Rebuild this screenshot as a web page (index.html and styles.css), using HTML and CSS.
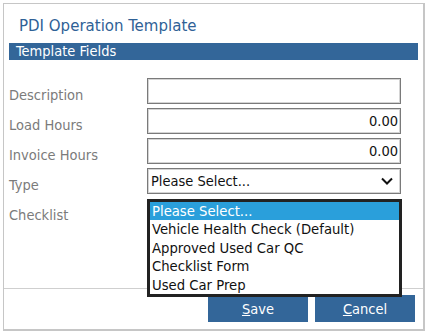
FILE: index.html
```html
<!DOCTYPE html>
<html lang="en">

<head>
    <meta charset="UTF-8">
    <title>PDI Operation Template</title>
    <link rel="stylesheet" href="styles.css">
</head>

<body>
    <div class="dialog">
        <h1 class="dialog-title">PDI Operation Template</h1>
        <div class="section-bar">Template Fields</div>

        <div class="form-grid">
            <label>Description</label>
            <div class="field"><input type="text" value=""></div>

            <label>Load Hours</label>
            <div class="field"><input type="text" class="num" value="0.00"></div>

            <label>Invoice Hours</label>
            <div class="field"><input type="text" class="num" value="0.00"></div>

            <label>Type</label>
            <div class="field">
                <div class="select-box">
                    <span>Please Select...</span>
                    <svg class="chevron" width="14" height="10" viewBox="0 0 14 10">
                        <path d="M2 2.5 L7 7.5 L12 2.5" fill="none" stroke="#111" stroke-width="2"/>
                    </svg>
                </div>
            </div>

            <label>Checklist</label>
            <div class="field dropdown-holder">
                <ul class="dropdown-list">
                    <li class="selected">Please Select...</li>
                    <li>Vehicle Health Check (Default)</li>
                    <li>Approved Used Car QC</li>
                    <li>Checklist Form</li>
                    <li>Used Car Prep</li>
                </ul>
            </div>
        </div>

        <div class="dialog-footer">
            <button class="btn"><u>S</u>ave</button>
            <button class="btn"><u>C</u>ancel</button>
        </div>
    </div>
</body>

</html>
```

FILE: styles.css
```css
* {
    margin: 0;
    padding: 0;
    box-sizing: border-box;
    font-family: 'DejaVu Sans Condensed', 'DejaVu Sans', sans-serif;
    font-stretch: condensed;
}

body {
    background: #fff;
    padding: 3px 0 0 3px;
}

.dialog {
    width: 422px;
    height: 328px;
    border: 1px solid #c6c6c6;
    border-right: 2px solid #c6c6c6;
    border-bottom: 2px solid #c6c6c6;
    display: flex;
    flex-direction: column;
}

.dialog-title {
    font-size: 16.7px;
    font-weight: normal;
    color: #2f6196;
    padding: 11px 0 0 15px;
    height: 39px;
}

.section-bar {
    margin: 0 5px;
    height: 17px;
    background: #336699;
    color: #fff;
    font-size: 14.5px;
    line-height: 17px;
    padding-left: 7px;
}

.form-grid {
    display: grid;
    grid-template-columns: 138px 254px;
    grid-auto-rows: 26px;
    row-gap: 4px;
    margin-top: 18px;
    padding-left: 5px;
}

.form-grid label {
    font-size: 14.5px;
    color: #7b7b7b;
    line-height: 30px;
    padding-top: 2px;
}

.field {
    position: relative;
}

.field input,
.select-box {
    width: 100%;
    height: 26px;
    border: 1px solid #7a7a7a;
    box-shadow: inset 0 0 0 1px #d4d4d4;
    font-size: 14.5px;
    color: #111;
    padding: 0 4px;
    background: #fff;
}

.field input.num {
    text-align: right;
    padding-right: 2px;
}

.select-box {
    display: flex;
    align-items: center;
    justify-content: space-between;
    padding: 0 6px 0 3px;
}

.dropdown-list {
    position: absolute;
    left: 0;
    top: 1px;
    width: 255px;
    list-style: none;
    border: 3px solid #222;
    background: #fff;
    z-index: 10;
}

.dropdown-list li {
    font-size: 14.7px;
    color: #111;
    height: 18.4px;
    line-height: 18px;
    padding-left: 2px;
}

.dropdown-list li.selected {
    background: #2a9fdb;
    color: #fff;
}

.dialog-footer {
    margin-top: auto;
    border-top: 1px solid #cfcfcf;
    height: 41px;
    display: flex;
    justify-content: flex-end;
    gap: 7px;
    padding: 6px 8px 0 0;
}

.btn {
    width: 100px;
    height: 27px;
    border: none;
    background: #336699;
    color: #fff;
    font-size: 14.5px;
}
```
